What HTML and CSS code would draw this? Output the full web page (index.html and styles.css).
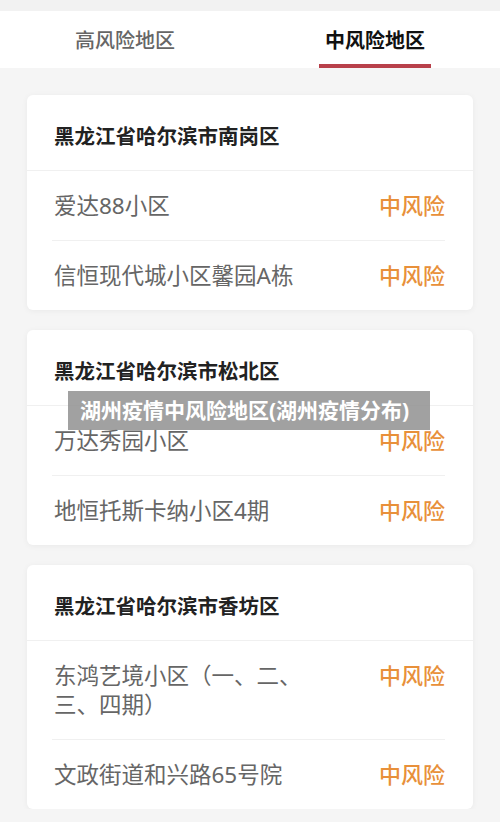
FILE: index.html
```html
<!DOCTYPE html>
<html lang="zh-CN">
<head>
    <meta charset="UTF-8">
    <meta name="viewport" content="width=device-width, initial-scale=1.0">
    <title>中风险地区</title>
    <link rel="stylesheet" href="styles.css">
</head>
<body>
    <div class="topband"></div>

    <!-- 标签栏 -->
    <div class="tabs">
        <div class="tab">高风险地区</div>
        <div class="tab active"><span>中风险地区</span></div>
    </div>

    <div class="list">
        <div class="card">
            <div class="card-head">黑龙江省哈尔滨市南岗区</div>
            <div class="row">
                <div class="name">爱达88小区</div>
                <div class="risk">中风险</div>
            </div>
            <div class="row">
                <div class="name">信恒现代城小区馨园A栋</div>
                <div class="risk">中风险</div>
            </div>
        </div>

        <div class="card">
            <div class="card-head">黑龙江省哈尔滨市松北区</div>
            <div class="row">
                <div class="name">万达秀园小区</div>
                <div class="risk">中风险</div>
            </div>
            <div class="row">
                <div class="name">地恒托斯卡纳小区4期</div>
                <div class="risk">中风险</div>
            </div>
        </div>

        <div class="card">
            <div class="card-head">黑龙江省哈尔滨市香坊区</div>
            <div class="row">
                <div class="name">东鸿艺境小区（一、二、三、四期）</div>
                <div class="risk">中风险</div>
            </div>
            <div class="row">
                <div class="name">文政街道和兴路65号院</div>
                <div class="risk">中风险</div>
            </div>
        </div>
    </div>

    <!-- 标题水印 -->
    <div class="banner">湖州疫情中风险地区(湖州疫情分布)</div>
</body>
</html>
```

FILE: styles.css
```css
/* 基本样式 */
body {
    margin: 0;
    background-color: #f5f5f5;
    font-family: "Noto Sans", "Noto Sans CJK SC", sans-serif;
    color: #666;
}

.topband {
    height: 11px;
    background-color: #f2f2f2;
}

.tabs {
    display: flex;
    height: 57px;
    background-color: #fff;
}

.tab {
    flex: 1;
    display: flex;
    justify-content: center;
    align-items: center;
    font-size: 20px;
    color: #666;
    font-weight: 500;
}

.tab.active {
    color: #111;
    font-weight: bold;
    position: relative;
}

.tab.active::after {
    content: "";
    position: absolute;
    bottom: 0;
    left: 69px;
    width: 112px;
    height: 4px;
    background-color: #b8404a;
}

.list {
    padding: 27px 27px 0;
    display: flex;
    flex-direction: column;
    gap: 20px;
}

.card {
    background-color: #fff;
    border-radius: 6px;
    box-shadow: 0 1px 6px rgba(0, 0, 0, 0.05);
}

.card-head {
    height: 67px;
    line-height: 67px;
    padding: 8px 0 0 27px;
    font-size: 20.5px;
    font-weight: bold;
    color: #222;
    border-bottom: 1px solid #f0f0f0;
}

.row {
    display: flex;
    justify-content: space-between;
    align-items: flex-start;
    margin: 0 28px 0 25px;
    padding: 20px 0 20px 2px;
    font-size: 22.5px;
    line-height: 29px;
}

.row + .row {
    border-top: 1px solid #f0f0f0;
}

.name {
    max-width: 255px;
    color: #666;
}

.risk {
    color: #e8903a;
    font-weight: 500;
    font-size: 22px;
}

/* 叠加在页面上的标题 */
.banner {
    position: absolute;
    top: 391px;
    left: 68px;
    width: 350px;
    height: 39px;
    line-height: 39px;
    padding-left: 12px;
    background-color: rgba(145, 145, 145, 0.85);
    color: #fff;
    font-size: 21px;
    font-weight: bold;
}
```
